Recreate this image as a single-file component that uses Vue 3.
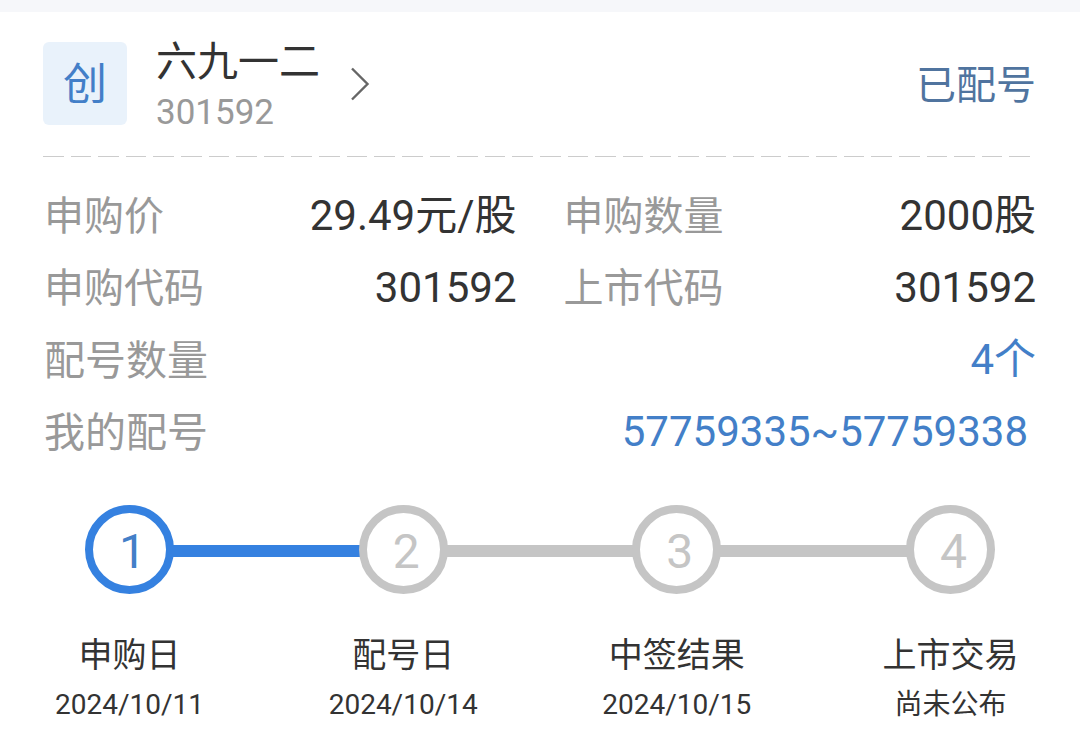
<script setup>
const details = [
  { label: '申购价', value: '29.49元/股' },
  { label: '申购数量', value: '2000股' },
  { label: '申购代码', value: '301592' },
  { label: '上市代码', value: '301592' },
  { label: '配号数量', value: '4个', wide: true },
  { label: '我的配号', value: '57759335~57759338', wide: true, inset: true },
]

const steps = [
  { title: '申购日', date: '2024/10/11', active: true },
  { title: '配号日', date: '2024/10/14' },
  { title: '中签结果', date: '2024/10/15' },
  { title: '上市交易', date: '尚未公布' },
]
</script>

<template>
  <main class="card">
    <header class="head">
      <span class="badge">创</span>
      <a class="stock" href="#">
        <span class="names">
          <span class="name">六九一二</span>
          <span class="code">301592</span>
        </span>
        <svg class="chevron" viewBox="0 0 20 34" aria-hidden="true">
          <path d="M2 1.5 L17.5 17 L2 32.5" fill="none" stroke="#666" stroke-width="2.4" />
        </svg>
      </a>
      <span class="status">已配号</span>
    </header>

    <div class="divider" aria-hidden="true">
      <i v-for="n in 36" :key="n" class="dash"></i>
    </div>

    <dl class="details">
      <div
        v-for="item in details"
        :key="item.label"
        class="row"
        :class="{ wide: item.wide, inset: item.inset }"
      >
        <dt>{{ item.label }}</dt>
        <dd>{{ item.value }}</dd>
      </div>
    </dl>

    <ol class="steps">
      <template v-for="(step, i) in steps" :key="step.title">
        <li class="step" :class="{ active: step.active }">
          <span class="circle">{{ i + 1 }}</span>
          <span class="title">{{ step.title }}</span>
          <span class="date">{{ step.date }}</span>
        </li>
        <li
          v-if="i < steps.length - 1"
          class="link"
          :class="{ active: step.active }"
          aria-hidden="true"
        ></li>
      </template>
    </ol>
  </main>
</template>

<style>
body {
  margin: 0;
  background: #fff;
}
</style>

<style scoped>
.card {
  border-top: 12px solid #f6f7fa;
  background: #fff;
  color: #333;
  font-family: Roboto, "Noto Sans CJK SC", sans-serif;
}

.head {
  display: flex;
  align-items: flex-start;
  padding: 30px 44px 24px 43px;
}

.badge {
  width: 84px;
  height: 83px;
  border-radius: 6px;
  background: #e9f2fb;
  color: #437fc8;
  font-size: 44px;
  line-height: 86px;
  text-align: center;
}

.stock {
  display: flex;
  align-items: flex-start;
  margin-left: 29px;
  color: inherit;
  text-decoration: none;
}

.names {
  display: flex;
  flex-direction: column;
  gap: 12px;
}

.name {
  font-size: 41px;
  line-height: 40px;
}

.code {
  color: #999;
  font-size: 35px;
  line-height: 38px;
}

.chevron {
  width: 20px;
  height: 34px;
  margin: 25px 0 0 30px;
}

.status {
  margin-left: auto;
  color: #50749f;
  font-size: 40px;
  line-height: 88px;
}

.divider {
  display: flex;
  gap: 7px;
  padding: 0 50px 0 43px;
}

.dash {
  flex: 1;
  height: 1px;
  background: #ccc;
}

.details {
  display: grid;
  grid-template-columns: 1fr 1fr;
  grid-auto-rows: 72px;
  column-gap: 47px;
  margin: 0;
  padding: 22px 44px 0;
}

.row {
  display: flex;
  justify-content: space-between;
}

.wide {
  grid-column: 1 / -1;
}

.inset {
  padding-right: 8px;
}

dt {
  color: #999;
  font-size: 40px;
  line-height: 76px;
}

.wide dt {
  font-size: 41px;
}

dd {
  margin: 0;
  font-size: 42px;
  line-height: 74px;
}

.wide dd {
  color: #437fc8;
}

.steps {
  display: flex;
  margin: 0;
  padding: 38px 85px 0;
  list-style: none;
}

.step {
  display: flex;
  flex-direction: column;
  align-items: center;
  width: 89px;
  white-space: nowrap;
}

.circle {
  box-sizing: border-box;
  width: 89px;
  height: 89px;
  padding-left: 6px;
  border: 8px solid #c5c5c5;
  border-radius: 50%;
  color: #c5c5c5;
  font-size: 48px;
  line-height: 78px;
  text-align: center;
}

.active .circle {
  border-color: #3581e0;
  color: #437fc8;
}

.link {
  flex: 1;
  height: 12px;
  margin: 40px -1px 0;
  background: #c5c5c5;
}

.link.active {
  background: #3581e0;
}

.title {
  margin-top: 36px;
  font-size: 34px;
  line-height: 50px;
}

.date {
  margin-top: 4px;
  font-size: 28px;
  line-height: 42px;
}
</style>
